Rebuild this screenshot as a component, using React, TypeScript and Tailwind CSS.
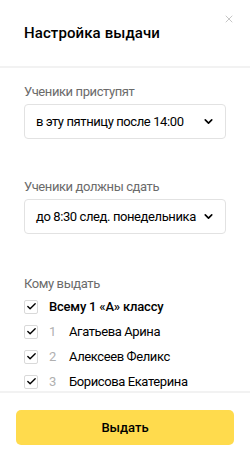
import { X, ChevronDown, Check } from 'lucide-react';

const students = ['Агатьева Арина', 'Алексеев Феликс', 'Борисова Екатерина'];

function Select({ value }: { value: string }) {
  return (
    <div className="mt-[3px] flex h-[35px] items-center justify-between rounded-[4px] border border-[#e2e2e2] pl-[11px] pr-[10px] text-black">
      <span className="whitespace-nowrap">{value}</span>
      <ChevronDown size={13} strokeWidth={3} className="text-black" />
    </div>
  );
}

function Box() {
  return (
    <span className="flex h-[14px] w-[14px] shrink-0 items-center justify-center rounded-[2px] border border-[#d9d9d9] bg-white">
      <Check size={11} strokeWidth={3} className="text-black" />
    </span>
  );
}

export default function App() {
  return (
    <div
      className="relative flex h-[460px] w-[250px] flex-col bg-white text-black"
      style={{ fontFamily: 'Roboto, "Noto Sans", sans-serif' }}
    >
      <button className="absolute right-[15px] top-[13px] text-[#b3b3b3]">
        <X size={12} strokeWidth={1.5} />
      </button>

      <div className="flex h-[66px] items-center pl-6 text-[15px] font-medium tracking-[0.1px]">Настройка выдачи</div>
      <div className="h-[2px] bg-[#f2f2f2]" />

      <div className="flex-1 overflow-hidden px-6 pt-[15px] text-[13px] tracking-[-0.4px]">
        <div className="h-[18px] leading-[18px] text-[#6b6b6b]">Ученики приступят</div>
        <Select value="в эту пятницу после 14:00" />

        <div className="mt-[39px] h-[18px] leading-[18px] text-[#6b6b6b]">Ученики должны сдать</div>
        <Select value="до 8:30 след. понедельника" />

        <div className="mt-[41px] h-[18px] leading-[18px] text-[#6b6b6b]">Кому выдать</div>
        <div className="mt-[1px] flex flex-col">
          <label className="flex h-[25px] items-center gap-[11px] font-medium tracking-[-0.2px]">
            <Box />
            <span className="whitespace-nowrap">Всему 1 «А» классу</span>
          </label>
          {students.map((name, i) => (
            <label key={name} className="flex h-[25px] items-center">
              <Box />
              <span className="w-[20px] pl-[11px] text-[#b0b0b0]">{i + 1}</span>
              <span className="whitespace-nowrap pl-[11px]">{name}</span>
            </label>
          ))}
        </div>
      </div>

      <div className="h-[2px] bg-[#f2f2f2]" />
      <div className="px-4 pb-[15px] pt-[17px]">
        <button className="flex h-[35px] w-full items-center justify-center rounded-[5px] bg-[#ffdb4d] text-[13px] font-medium text-black">
          Выдать
        </button>
      </div>
    </div>
  );
}
